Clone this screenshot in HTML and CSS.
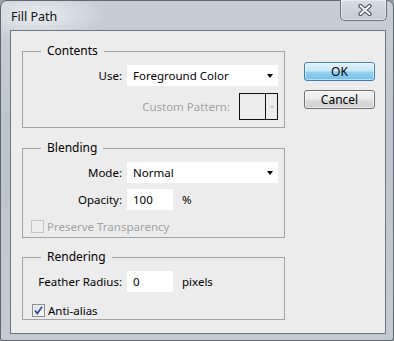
FILE: index.html
```html
<!DOCTYPE html>
<html>
<head>
<meta charset="utf-8">
<title>Fill Path</title>
<link rel="stylesheet" href="styles.css">
</head>
<body>
<div class="window">
  <div class="titlebar">
    <span class="title">Fill Path</span>
    <div class="close">
      <svg width="14" height="12" viewBox="0 0 14 12">
        <path d="M2.5 2 L11.5 10 M11.5 2 L2.5 10" stroke="#4a515a" stroke-width="4.2" stroke-linecap="round" fill="none"/>
        <path d="M2.5 2 L11.5 10 M11.5 2 L2.5 10" stroke="#ffffff" stroke-width="2" stroke-linecap="round" fill="none"/>
      </svg>
    </div>
  </div>
  <div class="client">
    <div class="groups">
      <fieldset class="group contents">
        <legend>Contents</legend>
        <div class="row first">
          <span class="lbl">Use:</span>
          <div class="select"><span>Foreground Color</span><i class="arrow"></i></div>
        </div>
        <div class="pattern-row">
          <span class="lbl disabled">Custom Pattern:</span>
          <div class="pattern"><span class="swatch"></span><span class="pdrop"><i class="arrow small"></i></span></div>
        </div>
      </fieldset>

      <fieldset class="group blending">
        <legend>Blending</legend>
        <div class="row first">
          <span class="lbl">Mode:</span>
          <div class="select"><span>Normal</span><i class="arrow"></i></div>
        </div>
        <div class="row second">
          <span class="lbl">Opacity:</span>
          <div class="field-wrap"><div class="input">100</div><span class="unit">%</span></div>
        </div>
        <div class="check-row preserve">
          <span class="checkbox disabled"></span><span class="disabled">Preserve Transparency</span>
        </div>
      </fieldset>

      <fieldset class="group rendering">
        <legend>Rendering</legend>
        <div class="row first">
          <span class="lbl">Feather Radius:</span>
          <div class="field-wrap"><div class="input">0</div><span class="unit">pixels</span></div>
        </div>
        <div class="check-row antialias">
          <span class="checkbox checked">
            <svg width="11" height="11" viewBox="0 0 11 11"><path d="M2 5.5 L4.3 8.5 L9 1.8" stroke="#2a4f9c" stroke-width="1.8" fill="none"/></svg>
          </span><span>Anti-alias</span>
        </div>
      </fieldset>
    </div>
    <div class="buttons">
      <div class="btn ok">OK</div>
      <div class="btn">Cancel</div>
    </div>
  </div>
</div>
</body>
</html>
```

FILE: styles.css
```css
html, body {
  margin: 0;
  padding: 0;
  background: #9aa0a8;
}
body {
  width: 394px;
  height: 341px;
  overflow: hidden;
  font-family: "Noto Sans", "Open Sans", sans-serif;
  font-size: 11.5px;
  color: #000;
}
.window {
  box-sizing: border-box;
  width: 394px;
  height: 341px;
  border: 1px solid #5f6770;
  border-radius: 7px 7px 3px 3px;
  padding: 0 7px 6px 9px;
  background:
    radial-gradient(ellipse 70px 26px at 36px 14px, rgba(235,238,242,0.95), rgba(235,238,242,0) 100%),
    linear-gradient(to bottom, #c7ced6 0%, #bcc4cd 40%, #c3cad2 100%);
  display: flex;
  flex-direction: column;
}
.titlebar {
  height: 29px;
  display: flex;
  justify-content: space-between;
  align-items: flex-start;
  flex: none;
}
.title {
  padding-left: 1px;
  margin-top: 8px;
  line-height: 16px;
  font-size: 12.5px;
  color: #101010;
}
.close {
  box-sizing: border-box;
  width: 47px;
  height: 21px;
  margin-top: -1px;
  margin-right: -1px;
  border: 1px solid #6b737c;
  border-top: none;
  border-radius: 0 0 5px 5px;
  background: linear-gradient(to bottom, #d6dce3, #c4cbd3);
  box-shadow: inset 0 0 0 1px rgba(255,255,255,0.45);
  display: flex;
  align-items: center;
  justify-content: center;
  padding-left: 2px;
}
.client {
  flex: 1;
  box-sizing: border-box;
  border: 1px solid #6e7781;
  background: #ececec;
  display: flex;
  align-items: flex-start;
  padding: 13px 0 0 11px;
}
.groups {
  width: 263px;
  display: flex;
  flex-direction: column;
}
.group {
  margin: 0;
  padding: 0 6px 0 8px;
  border: 1px solid #a3a3a3;
  min-width: 0;
}
.group legend {
  margin-left: 10px;
  padding: 0 6px;
  line-height: 14px;
  height: 14px;
  font-size: 12px;
}
.blending { margin-top: 13px; padding-bottom: 4px; }
.rendering { margin-top: 12px; padding-bottom: 2px; }
.contents { padding-bottom: 7px; }

.row {
  display: grid;
  grid-template-columns: 91px 1fr;
  column-gap: 5px;
  align-items: center;
}
.row.first { margin-top: 7px; }
.row.second { margin-top: 6px; }
.lbl {
  text-align: right;
  white-space: nowrap;
}
.disabled { color: #a2a2a2; }

.select {
  height: 21px;
  background: #fff;
  display: flex;
  align-items: center;
  justify-content: space-between;
  padding: 0 5px 0 6px;
}
.arrow {
  width: 0;
  height: 0;
  border-left: 3.5px solid transparent;
  border-right: 3.5px solid transparent;
  border-top: 4px solid #000;
}
.arrow.small {
  border-left-width: 2px;
  border-right-width: 2px;
  border-top: 2px solid #b5b5b5;
}
.pattern-row {
  margin-top: 7px;
  display: flex;
  justify-content: flex-end;
  align-items: center;
  gap: 9px;
}
.pattern {
  box-sizing: border-box;
  width: 39px;
  height: 27px;
  border: 1px solid #111;
  display: flex;
}
.swatch {
  width: 25px;
  border-right: 1px solid #111;
}
.pdrop {
  flex: 1;
  display: flex;
  align-items: center;
  justify-content: center;
}
.field-wrap {
  display: flex;
  align-items: center;
  gap: 9px;
}
.input {
  box-sizing: border-box;
  width: 46px;
  height: 21px;
  background: #fff;
  padding-left: 6px;
  line-height: 21px;
}
.check-row {
  display: flex;
  align-items: center;
  height: 13px;
  gap: 3px;
}
.preserve { margin-top: 10px; }
.antialias { margin-top: 12px; padding-left: 1px; }
.checkbox {
  box-sizing: border-box;
  width: 13px;
  height: 13px;
  border: 1px solid #8a8d91;
  background: linear-gradient(135deg, #dcdcdc, #fbfbfb);
  box-shadow: inset 0 0 0 1px #f2f2f2;
  display: flex;
  align-items: center;
  justify-content: center;
}
.checkbox.disabled {
  border-color: #c3c3c3;
  background: #ededed;
  box-shadow: none;
}
.buttons {
  margin-left: 19px;
  margin-top: 18px;
  display: flex;
  flex-direction: column;
  gap: 9px;
}
.btn {
  box-sizing: border-box;
  width: 71px;
  height: 19px;
  border: 1px solid #707070;
  border-radius: 3px;
  background: linear-gradient(to bottom, #f3f3f3 0%, #ebebeb 48%, #dddddd 52%, #cfcfcf 100%);
  box-shadow: inset 0 0 0 1px rgba(255,255,255,0.6);
  text-align: center;
  line-height: 17px;
  font-size: 12px;
}
.btn.ok {
  border-color: #3c7fb1;
  background: linear-gradient(to bottom, #e5f4fc 0%, #c4e5f6 48%, #98d1ef 52%, #6dc0e8 100%);
  box-shadow: inset 0 0 0 1px rgba(255,255,255,0.5);
}
```
